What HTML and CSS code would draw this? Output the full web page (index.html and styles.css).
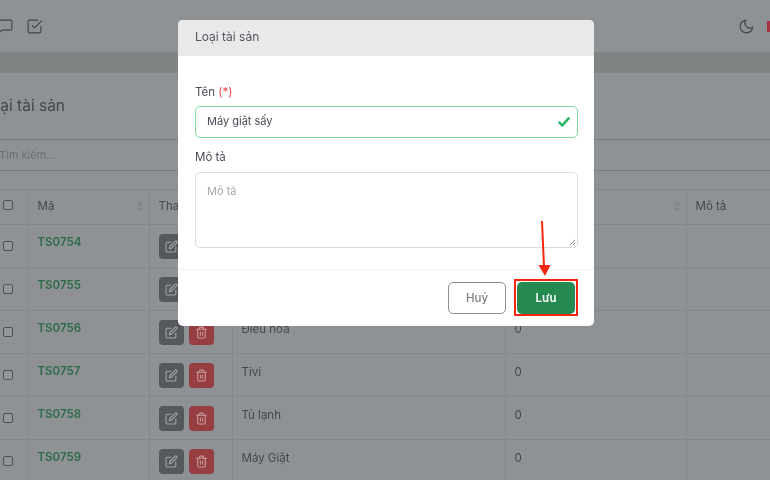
FILE: index.html
```html
<!DOCTYPE html>
<html lang="vi">
<head>
<meta charset="utf-8">
<title>Loại tài sản</title>
<link rel="stylesheet" href="styles.css">
</head>
<body>
<div class="page">
  <header class="topbar">
    <div class="tools">
      <svg class="ic" viewBox="0 0 24 24"><path d="M21 15a2 2 0 0 1-2 2H7l-4 4V5a2 2 0 0 1 2-2h14a2 2 0 0 1 2 2z"/></svg>
      <svg class="ic" viewBox="0 0 24 24"><path d="M9 11l3 3L22 4"/><path d="M21 12v7a2 2 0 0 1-2 2H5a2 2 0 0 1-2-2V5a2 2 0 0 1 2-2h11"/></svg>
    </div>
    <div class="tools right">
      <svg class="ic" viewBox="0 0 24 24"><path d="M21 12.79A9 9 0 1 1 11.21 3 7 7 0 0 0 21 12.79z"/></svg>
      <span class="flag"></span>
    </div>
  </header>
  <div class="strip"></div>
  <h1 class="title">Loại tài sản</h1>
  <div class="search">Tìm kiếm...</div>
  <table class="grid">
    <colgroup><col class="c0"><col class="c1"><col class="c2"><col class="c3"><col class="c4"><col></colgroup>
    <thead>
      <tr>
        <th><span class="cb"></span></th>
        <th><div class="th">Mã<span class="sort"></span></div></th>
        <th>Thao tác</th>
        <th><div class="th">Tên<span class="sort"></span></div></th>
        <th><div class="th">Số lượng<span class="sort"></span></div></th>
        <th>Mô tả</th>
      </tr>
    </thead>
    <tbody>
      <tr><td><span class="cb"></span></td><td class="code">TS0754</td><td><div class="acts"><span class="btn dark"><svg viewBox="0 0 24 24"><use href="#e"/></svg></span><span class="btn red"><svg viewBox="0 0 24 24"><use href="#t"/></svg></span></div></td><td>Bếp</td><td>0</td><td></td></tr>
      <tr><td><span class="cb"></span></td><td class="code">TS0755</td><td><div class="acts"><span class="btn dark"><svg viewBox="0 0 24 24"><use href="#e"/></svg></span><span class="btn red"><svg viewBox="0 0 24 24"><use href="#t"/></svg></span></div></td><td>Quạt</td><td>0</td><td></td></tr>
      <tr><td><span class="cb"></span></td><td class="code">TS0756</td><td><div class="acts"><span class="btn dark"><svg viewBox="0 0 24 24"><use href="#e"/></svg></span><span class="btn red"><svg viewBox="0 0 24 24"><use href="#t"/></svg></span></div></td><td>Điều hoà</td><td>0</td><td></td></tr>
      <tr><td><span class="cb"></span></td><td class="code">TS0757</td><td><div class="acts"><span class="btn dark"><svg viewBox="0 0 24 24"><use href="#e"/></svg></span><span class="btn red"><svg viewBox="0 0 24 24"><use href="#t"/></svg></span></div></td><td>Tivi</td><td>0</td><td></td></tr>
      <tr><td><span class="cb"></span></td><td class="code">TS0758</td><td><div class="acts"><span class="btn dark"><svg viewBox="0 0 24 24"><use href="#e"/></svg></span><span class="btn red"><svg viewBox="0 0 24 24"><use href="#t"/></svg></span></div></td><td>Tủ lạnh</td><td>0</td><td></td></tr>
      <tr><td><span class="cb"></span></td><td class="code">TS0759</td><td><div class="acts"><span class="btn dark"><svg viewBox="0 0 24 24"><use href="#e"/></svg></span><span class="btn red"><svg viewBox="0 0 24 24"><use href="#t"/></svg></span></div></td><td>Máy Giặt</td><td>0</td><td></td></tr>
    </tbody>
  </table>
</div>

<svg class="defs" aria-hidden="true">
  <symbol id="e" viewBox="0 0 24 24"><path d="M11 4H4a2 2 0 0 0-2 2v14a2 2 0 0 0 2 2h14a2 2 0 0 0 2-2v-7"/><path d="M18.5 2.5a2.12 2.12 0 0 1 3 3L12 15l-4 1 1-4z"/></symbol>
  <symbol id="t" viewBox="0 0 24 24"><path d="M3 6h18"/><path d="M19 6v14a2 2 0 0 1-2 2H7a2 2 0 0 1-2-2V6m3 0V4a2 2 0 0 1 2-2h4a2 2 0 0 1 2 2v2"/><path d="M10 11v6"/><path d="M14 11v6"/></symbol>
</svg>

<section class="modal">
  <div class="modal-head">Loại tài sản</div>
  <div class="modal-body">
    <label class="lbl">Tên <span class="req">(*)</span></label>
    <div class="input valid">Máy giặt sấy
      <svg class="tick" viewBox="0 0 16 14"><path d="M2 7.500l4 4 8-9"/></svg>
    </div>
    <label class="lbl second">Mô tả</label>
    <div class="area">Mô tả
      <svg class="grip" viewBox="0 0 8 8"><path d="M1 7l6-6M4.500 7L7 4.500"/></svg>
    </div>
  </div>
  <div class="modal-foot">
    <button class="b cancel">Huỷ</button>
    <span class="mark"><button class="b save">Lưu</button></span>
  </div>
</section>

<svg class="arrow" viewBox="0 0 20 60"><path class="shaft" d="M6 1l2 46"/><path class="head" d="M2.500 45h12l-5.500 11z"/></svg>
</body>
</html>
```
FILE: styles.css
```css
* { box-sizing: border-box; }
html, body { margin: 0; height: 100%; }
body {
  width: 770px;
  height: 480px;
  overflow: hidden;
  position: relative;
  background: #8f9294;
  font-family: Inter, "Liberation Sans", sans-serif;
  font-size: 11.5px;
  color: #4b4c56;
  filter: blur(0.3px);
}
.page { margin-left: -24px; width: 830px; }
.topbar {
  height: 52px;
  display: flex;
  justify-content: space-between;
  align-items: center;
  padding: 0 0 0 21px;
}
.tools { display: flex; align-items: center; gap: 12px; }
.tools.right { padding-right: 19px; }
.ic {
  width: 17px;
  height: 17px;
  fill: none;
  stroke: #43464c;
  stroke-width: 1.7;
  stroke-linecap: round;
  stroke-linejoin: round;
}
.flag { width: 20px; height: 11px; background: #a83244; }
.strip { height: 21px; background: #818485; }
.title {
  margin: 0;
  padding: 22px 0 0 6px;
  height: 66px;
  font-size: 15.5px;
  font-weight: 400;
  line-height: 22px;
  color: #43444f;
}
.search {
  height: 32px;
  border-top: 1px solid #7a7d80;
  border-bottom: 1px solid #7a7d80;
  padding-left: 23px;
  line-height: 30px;
  color: #6d6f72;
  font-size: 11px;
}
.grid {
  margin-top: 18px;
  margin-left: 24px;
  border-collapse: collapse;
  table-layout: fixed;
  width: 806px;
}
.c0 { width: 28px; }
.c1 { width: 121px; }
.c2 { width: 83px; }
.c3 { width: 273px; }
.c4 { width: 181px; }
.grid th, .grid td {
  border: 1px solid #84878b;
  text-align: left;
  font-weight: 400;
  vertical-align: top;
  padding: 0 9px;
  color: #45464e;
}
.grid th:first-child, .grid td:first-child { border-left: 0; padding: 0; }
.grid thead tr { height: 35px; }
.grid tbody tr { height: 43px; }
.grid th { line-height: 33px; }
.grid td { line-height: 16px; padding-top: 10px; }
.th { display: flex; justify-content: space-between; align-items: center; margin-right: -4px; }
.sort {
  width: 7px;
  height: 11px;
  clip-path: polygon(50% 0, 100% 42%, 0 42%, 50% 0, 50% 100%, 0 58%, 100% 58%, 50% 100%);
  background-color: #84878a;
}
.cb {
  display: block;
  width: 10px;
  height: 10px;
  margin: 10px 0 0 3px;
  border: 1px solid #4c4f53;
  border-radius: 2px;
  background: #94979a;
}
.grid td .cb { margin-top: 16px; }
.grid td.code { color: #2d6a49; font-weight: 600; font-size: 11.5px; padding-top: 8.5px; }
.acts { display: flex; gap: 5px; margin-top: -1px; }
.btn {
  width: 25px;
  height: 25px;
  border-radius: 4px;
  display: flex;
  align-items: center;
  justify-content: center;
}
.btn svg {
  width: 13px;
  height: 13px;
  fill: none;
  stroke: #a3a5a8;
  stroke-width: 2;
  stroke-linecap: round;
  stroke-linejoin: round;
}
.btn.dark { background: #55585c; }
.btn.red { background: #973e43; }
.btn.red svg { stroke: #c99a9c; }
.defs { position: absolute; width: 0; height: 0; }

.modal {
  position: absolute;
  left: 178px;
  top: 20px;
  width: 416px;
  height: 306px;
  background: #fff;
  border-radius: 5px;
  overflow: hidden;
  color: #4b4c58;
}
.modal-head {
  height: 36px;
  background: #e9e9ea;
  padding-left: 17px;
  line-height: 34px;
  font-size: 12px;
  color: #53535f;
}
.modal-body { padding: 28px 16px 0 17px; height: 214px; border-bottom: 1px solid #f2f2f3; }
.lbl { display: block; font-size: 11.5px; line-height: 16px; }
.lbl.second { margin-top: 11px; }
.req { color: #ef4444; }
.input {
  position: relative;
  margin-top: 6px;
  height: 32px;
  border: 1px solid #7edb9f;
  border-radius: 5px;
  padding-left: 11px;
  line-height: 29px;
  font-size: 11px;
}
.tick {
  position: absolute;
  right: 6px;
  top: 8px;
  width: 14px;
  height: 13px;
  fill: none;
  stroke: #28b765;
  stroke-width: 2.8;
}
.area {
  position: relative;
  margin-top: 7px;
  height: 76px;
  border: 1px solid #dcdde0;
  border-radius: 5px;
  padding: 10px 11px;
  line-height: 16px;
  color: #a9aab0;
  font-size: 11px;
}
.grip {
  position: absolute;
  right: 1px;
  bottom: 1px;
  width: 7px;
  height: 7px;
  fill: none;
  stroke: #77787c;
  stroke-width: 1;
}
.modal-foot {
  display: flex;
  justify-content: flex-end;
  gap: 11px;
  padding: 12px 19px 0 0;
}
.b {
  display: block;
  width: 58px;
  height: 32px;
  border-radius: 5px;
  font: 500 11.5px Inter, "Liberation Sans", sans-serif;
  padding: 0;
}
.cancel { background: #fff; border: 1px solid #8f9195; color: #7c7e83; }
.mark {
  display: block;
  margin: -3px -3px -2px;
  padding: 1px 1px 0;
  border: 2px solid #f5260f;
}
.save {
  background: #258a4f;
  border: 0;
  color: #fff;
  font-weight: 600;
}
.arrow {
  position: absolute;
  left: 536px;
  top: 220px;
  width: 20px;
  height: 60px;
}
.shaft { stroke: #f5260f; stroke-width: 2; fill: none; }
.head { fill: #f5260f; }
```
